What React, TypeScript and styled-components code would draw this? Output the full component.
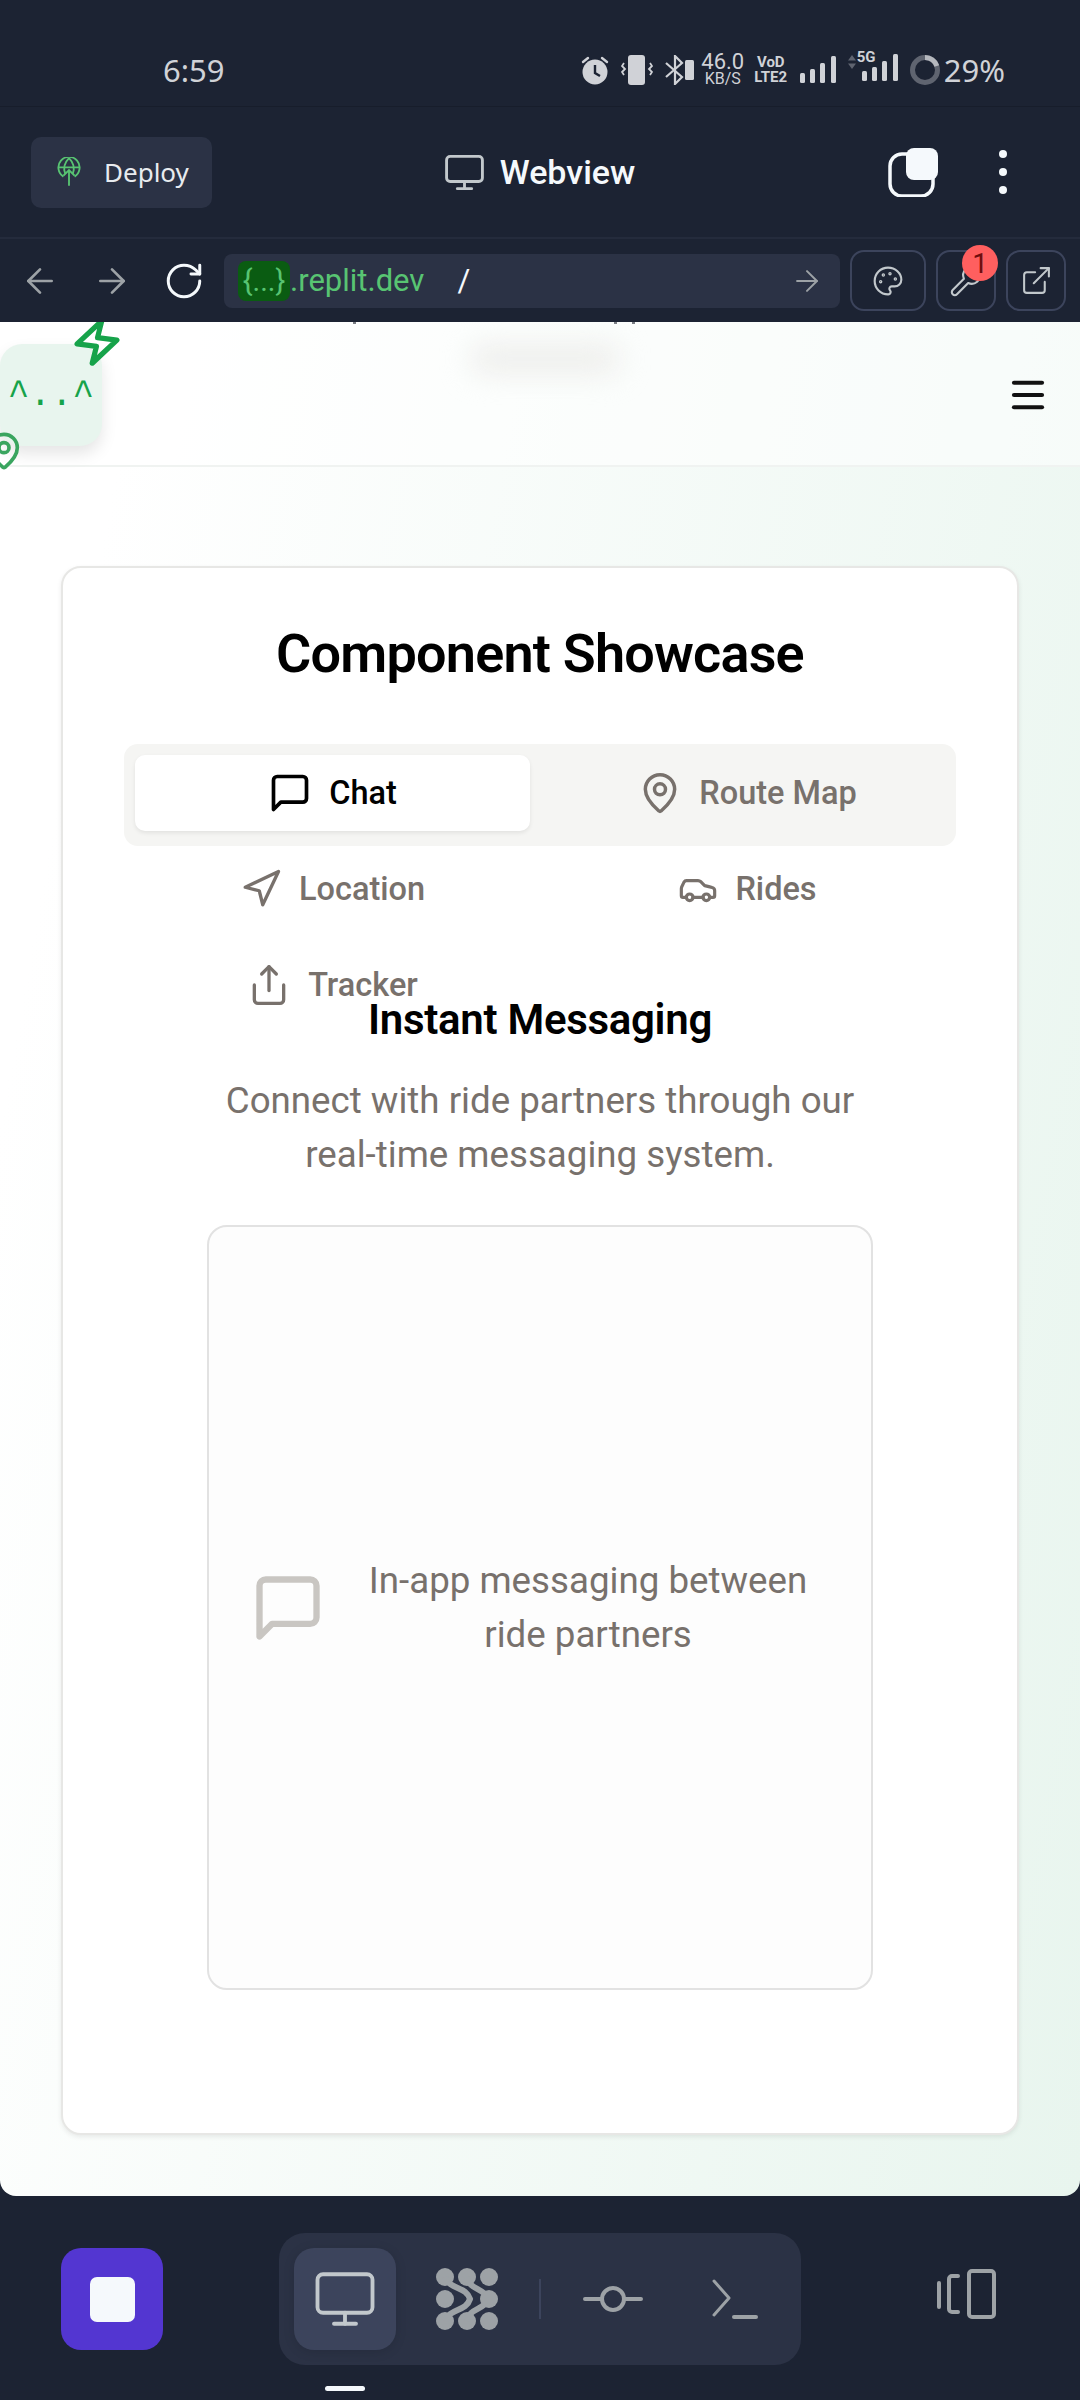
import styled, { createGlobalStyle } from "styled-components";
import {
  ArrowLeft,
  ArrowRight,
  Car,
  ExternalLink,
  MapPin,
  Menu,
  Monitor,
  Navigation,
  Palette,
  RotateCw,
  Share,
  Wrench,
} from "lucide-react";

const GlobalStyle = createGlobalStyle`
  html, body {
    margin: 0;
    padding: 0;
    background: #1c2333;
  }
  * {
    box-sizing: border-box;
  }
`;

const ChatIcon = ({ size, color }: { size: number; color: string }) => (
  <svg width={size} height={size} viewBox="0 0 24 24" fill="none" stroke={color} strokeWidth="2" strokeLinecap="round" strokeLinejoin="round">
    <path d="M21 15a2 2 0 0 1-2 2H7l-4 4V5a2 2 0 0 1 2-2h14a2 2 0 0 1 2 2z" />
  </svg>
);

const BoltIcon = () => (
  <svg width="52" height="52" viewBox="0 0 24 24" fill="none" stroke="#16a34a" strokeWidth="2.4" strokeLinecap="round" strokeLinejoin="round">
    <polygon points="13 2 3 14 12 14 11 22 21 10 12 10 13 2" />
  </svg>
);

const AlarmIcon = () => (
  <svg width="28" height="30" viewBox="0 0 28 30" fill="none">
    <circle cx="14" cy="17" r="12.5" fill="#d0d2d7" />
    <path d="M14 10v8l5 3" stroke="#1c2333" strokeWidth="2.4" />
    <path d="M2 7l5-4M26 7l-5-4" stroke="#d0d2d7" strokeWidth="2.4" strokeLinecap="round" />
  </svg>
);

const VibrateIcon = () => (
  <svg width="32" height="30" viewBox="0 0 32 30" fill="none">
    <rect x="7" y="0" width="17" height="30" rx="3" fill="#d0d2d7" />
    <path d="M3 8l-2 3 3 3-3 3 2 3M29 8l2 3-3 3 3 3-2 3" stroke="#d0d2d7" strokeWidth="1.8" />
  </svg>
);

const BluetoothIcon = () => (
  <svg width="30" height="30" viewBox="0 0 30 30" fill="none">
    <path d="M1 8l16 14-7 7V1l7 7L1 22" stroke="#d0d2d7" strokeWidth="2.2" />
    <rect x="20" y="5" width="9" height="20" rx="1.5" fill="#d0d2d7" />
  </svg>
);

const SignalBars = () => (
  <svg width="36" height="27" viewBox="0 0 36 27" fill="#d0d2d7">
    <rect x="0" y="17" width="5" height="10" rx="1.5" />
    <rect x="10" y="13" width="5" height="14" rx="1.5" />
    <rect x="20" y="7" width="5" height="20" rx="1.5" />
    <rect x="31" y="0" width="5" height="27" rx="1.5" />
  </svg>
);

const DataArrows = () => (
  <svg width="8" height="14" viewBox="0 0 8 14" fill="#5f6470">
    <path d="M4 0l4 5.5H0zM4 14l4-5.5H0z" />
  </svg>
);

const BatteryRing = () => (
  <svg width="30" height="30" viewBox="0 0 30 30" fill="none">
    <circle cx="15" cy="15" r="12.5" stroke="#5f6470" strokeWidth="5" />
    <path d="M15 2.5A12.5 12.5 0 0 1 26.8 11" stroke="#b5b8be" strokeWidth="5" />
  </svg>
);

const DeployIcon = () => (
  <svg width="24" height="30" viewBox="0 0 26 32" fill="none" stroke="#58c472" strokeWidth="2">
    <path d="M7 21a11.5 11.5 0 1 1 12 0" />
    <path d="M2 11h22M13 1c-6 6-6 12-4 17M13 1c6 6 6 12 4 17" />
    <path d="M13 31V14M7 20l6-6 6 6" />
  </svg>
);

const TabsStackIcon = () => (
  <svg width="50" height="50" viewBox="0 0 50 50" fill="none">
    <rect x="2" y="7" width="43" height="42" rx="12" stroke="#f5f9fc" strokeWidth="3.5" />
    <rect x="18" y="1" width="32" height="32" rx="8" fill="#f5f9fc" />
  </svg>
);

const AgentIcon = () => (
  <svg width="62" height="62" viewBox="0 0 62 62" fill="#9da2a6" stroke="none">
    <circle cx="9" cy="9" r="9" />
    <circle cx="31" cy="9" r="9" />
    <circle cx="53" cy="9" r="9" />
    <circle cx="9" cy="31" r="9" />
    <circle cx="53" cy="31" r="9" />
    <circle cx="9" cy="53" r="9" />
    <circle cx="31" cy="53" r="9" />
    <circle cx="53" cy="53" r="9" />
    <path d="M9 9C14 22 30 18 34 31C30 44 14 40 9 53M31 9C33 22 48 20 53 31C48 42 33 40 31 53" fill="none" stroke="#9da2a6" strokeWidth="6" />
  </svg>
);

const CommitIcon = () => (
  <svg width="60" height="28" viewBox="0 0 60 28" fill="none" stroke="#9da2a6" strokeWidth="4" strokeLinecap="round">
    <circle cx="30" cy="14" r="11" />
    <path d="M2 14h17M41 14h17" />
  </svg>
);

const ShellIcon = () => (
  <svg width="46" height="40" viewBox="0 0 46 40" fill="none" stroke="#9da2a6" strokeWidth="3" strokeLinecap="round" strokeLinejoin="round">
    <path d="M2 2l15 17-15 17" />
    <path d="M22 38h22" strokeWidth="4" />
  </svg>
);

const PanelsIcon = () => (
  <svg width="60" height="50" viewBox="0 0 60 50" fill="none" stroke="#9da2a6" strokeWidth="4" strokeLinecap="round" strokeLinejoin="round">
    <path d="M2 14v24" />
    <path d="M21 7h-6a3 3 0 0 0-3 3v30a3 3 0 0 0 3 3h6" />
    <rect x="32" y="2" width="25" height="46" rx="3" />
  </svg>
);

const App = () => {
  return (
    <Screen>
      <GlobalStyle />
      <StatusBar>
        <Clock>6:59</Clock>
        <StatusIcons>
          <AlarmSlot>
            <AlarmIcon />
          </AlarmSlot>
          <VibrateIcon />
          <BluetoothIcon />
          <NetSpeed>
            <strong>46.0</strong>
            <span>KB/S</span>
          </NetSpeed>
          <VolteTag>
            <span>VoD</span>
            <span>LTE2</span>
          </VolteTag>
          <SignalBars />
          <FiveG>
            <DataArrows />
            <small>5G</small>
            <SignalBars />
          </FiveG>
          <BatteryRing />
          <BatteryText>29%</BatteryText>
        </StatusIcons>
      </StatusBar>

      <AppHeader>
        <DeployButton>
          <DeployIcon />
          Deploy
        </DeployButton>
        <HeaderTitle>
          <Monitor size={43} color="#c2c8cc" strokeWidth={1.6} />
          Webview
        </HeaderTitle>
        <HeaderActions>
          <TabsStackIcon />
          <Kebab>
            <i />
            <i />
            <i />
          </Kebab>
        </HeaderActions>
      </AppHeader>

      <UrlRow>
        <NavButton>
          <ArrowLeft size={40} color="#9da2a6" strokeWidth={1.6} />
        </NavButton>
        <NavButton>
          <ArrowRight size={40} color="#9da2a6" strokeWidth={1.6} />
        </NavButton>
        <NavButton>
          <RotateCw size={42} color="#f5f9fc" strokeWidth={1.7} />
        </NavButton>
        <UrlField>
          <UrlChip>{"{...}"}</UrlChip>
          <UrlHost>.replit.dev</UrlHost>
          <UrlPath>/</UrlPath>
          <ArrowRight size={34} color="#9da2a6" strokeWidth={1.4} />
        </UrlField>
        <ToolButton $width={76}>
          <Palette size={32} color="#c2c8cc" strokeWidth={1.6} />
        </ToolButton>
        <ToolButton $width={60}>
          <Wrench size={34} color="#c2c8cc" strokeWidth={1.5} />
          <Badge>1</Badge>
        </ToolButton>
        <ToolButton $width={60}>
          <ExternalLink size={33} color="#c2c8cc" strokeWidth={1.5} />
        </ToolButton>
      </UrlRow>

      <Viewport>
        <SiteHeader>
          <ClippedStroke $x={353} />
          <ClippedStroke $x={614} />
          <ClippedStroke $x={632} />
          <BlurredTitle />
          <LogoTile>^..^</LogoTile>
          <LogoBolt>
            <BoltIcon />
          </LogoBolt>
          <LogoPin>
            <MapPin size={40} color="#3aa55f" strokeWidth={2.2} />
          </LogoPin>
          <Menu size={42} color="#111" strokeWidth={2.4} />
        </SiteHeader>

        <Card>
          <CardTitle>Component Showcase</CardTitle>
          <TabList>
            <Tab $active>
              <ChatIcon size={44} color="#000" />
              Chat
            </Tab>
            <Tab>
              <MapPin size={44} strokeWidth={1.9} />
              Route Map
            </Tab>
            <Tab>
              <Navigation size={42} strokeWidth={1.9} />
              Location
            </Tab>
            <Tab>
              <Car size={40} strokeWidth={1.9} />
              Rides
            </Tab>
            <Tab>
              <Share size={44} strokeWidth={1.8} />
              Tracker
            </Tab>
          </TabList>

          <PanelTitle>Instant Messaging</PanelTitle>
          <PanelText>
            Connect with ride partners through our
            <br />
            real-time messaging system.
          </PanelText>

          <Placeholder>
            <ChatIcon size={76} color="#c9c6c2" />
            <PlaceholderText>In-app messaging between ride partners</PlaceholderText>
          </Placeholder>
        </Card>
      </Viewport>

      <BottomBar>
        <StopButton>
          <i />
        </StopButton>
        <ToolPill>
          <PillItem $active>
            <Monitor size={66} color="#c2c8cc" strokeWidth={1.4} />
          </PillItem>
          <PillItem>
            <AgentIcon />
          </PillItem>
          <PillDivider />
          <PillItem>
            <CommitIcon />
          </PillItem>
          <PillItem>
            <ShellIcon />
          </PillItem>
        </ToolPill>
        <PanelsButton>
          <PanelsIcon />
        </PanelsButton>
        <HomeIndicator />
      </BottomBar>
    </Screen>
  );
};

const Screen = styled.div`
  width: 1080px;
  height: 2400px;
  display: flex;
  flex-direction: column;
  overflow: hidden;
  background: #1c2333;
  font-family: "Roboto", "Liberation Sans", sans-serif;
`;

const StatusBar = styled.div`
  height: 107px;
  flex: none;
  padding: 33px 75px 0 163px;
  display: flex;
  align-items: center;
  justify-content: space-between;
  border-bottom: 1px solid #171d2b;
`;

const Clock = styled.div`
  font-family: "Noto Sans", sans-serif;
  font-size: 31px;
  color: #d0d2d7;
`;

const StatusIcons = styled.div`
  display: flex;
  align-items: center;
  gap: 12px;
  color: #d0d2d7;
`;

const AlarmSlot = styled.div`
  display: flex;
`;

const NetSpeed = styled.div`
  width: 42px;
  margin: 0 -2px 0 -5px;
  display: flex;
  flex-direction: column;
  align-items: center;

  strong {
    font-size: 22px;
    font-weight: 400;
    line-height: 18px;
  }
  span {
    font-size: 16px;
    line-height: 15px;
  }
`;

const VolteTag = styled.div`
  width: 34px;
  display: flex;
  flex-direction: column;
  align-items: center;
  font-size: 15px;
  font-weight: 700;
  line-height: 15px;
`;

const FiveG = styled.div`
  position: relative;
  padding-left: 14px;

  svg:first-child {
    position: absolute;
    left: 0;
    top: 1px;
  }

  small {
    position: absolute;
    left: 9px;
    top: -6px;
    font-size: 15px;
    font-weight: 700;
  }
`;

const BatteryText = styled.div`
  font-family: "Noto Sans", sans-serif;
  font-size: 31px;
  margin-left: -8px;
`;

const AppHeader = styled.div`
  height: 132px;
  flex: none;
  padding: 0 31px;
  display: grid;
  grid-template-columns: 1fr auto 1fr;
  align-items: center;
  border-bottom: 2px solid #242b3c;
`;

const DeployButton = styled.div`
  width: 181px;
  height: 71px;
  padding-left: 26px;
  display: flex;
  align-items: center;
  gap: 23px;
  border-radius: 10px;
  background: #2b3245;
  color: #e8ebef;
  font-family: "Noto Sans", sans-serif;
  font-size: 26px;
`;

const HeaderTitle = styled.div`
  display: flex;
  align-items: center;
  gap: 14px;
  margin-left: -2px;
  color: #f5f9fc;
  font-size: 34px;
  font-weight: 500;
`;

const HeaderActions = styled.div`
  justify-self: end;
  padding-right: 42px;
  display: flex;
  align-items: center;
  gap: 61px;
`;

const Kebab = styled.div`
  display: flex;
  flex-direction: column;
  gap: 10px;

  i {
    width: 8px;
    height: 8px;
    border-radius: 50%;
    background: #f5f9fc;
  }
`;

const UrlRow = styled.div`
  height: 83px;
  flex: none;
  padding: 0 12px 0 11px;
  display: flex;
  align-items: center;
  gap: 10px;
`;

const NavButton = styled.div`
  width: 58px;
  margin-right: 4px;
  display: flex;
  justify-content: center;
`;

const UrlField = styled.div`
  width: 616px;
  height: 54px;
  margin-left: -3px;
  padding: 0 16px 0 14px;
  display: flex;
  align-items: center;
  border-radius: 8px;
  background: #2b3245;
  font-size: 31px;
`;

const UrlChip = styled.span`
  height: 40px;
  width: 52px;
  display: flex;
  align-items: center;
  justify-content: center;
  border-radius: 8px;
  background: #0a5c12;
  color: #58c472;
  font-size: 29px;
`;

const UrlHost = styled.span`
  color: #58c472;
`;

const UrlPath = styled.span`
  flex: 1;
  padding-left: 33px;
  color: #f5f9fc;
`;

const ToolButton = styled.div<{ $width: number }>`
  position: relative;
  width: ${(p) => p.$width}px;
  height: 61px;
  display: flex;
  align-items: center;
  justify-content: center;
  border: 2px solid #3c445c;
  border-radius: 14px;
`;

const Badge = styled.div`
  position: absolute;
  top: -7px;
  right: -4px;
  width: 36px;
  height: 36px;
  display: flex;
  align-items: center;
  justify-content: center;
  border-radius: 50%;
  background: #ff5f5f;
  color: #6f0e0e;
  font-size: 28px;
`;

const Viewport = styled.div`
  flex: 1;
  position: relative;
  overflow: hidden;
  border-radius: 0 0 16px 16px;
  background: linear-gradient(100deg, #ffffff 10%, #e8f5ee 100%);
`;

const SiteHeader = styled.div`
  position: relative;
  height: 145px;
  padding: 2px 31px 0 0;
  display: flex;
  align-items: center;
  justify-content: flex-end;
  background: rgba(255, 255, 255, 0.55);
  border-bottom: 2px solid #f0f3f1;
`;

const ClippedStroke = styled.span<{ $x: number }>`
  position: absolute;
  top: 0;
  left: ${(p) => p.$x}px;
  width: 3px;
  height: 2px;
  background: #7a7d84;
`;

const BlurredTitle = styled.div`
  position: absolute;
  top: 22px;
  left: 470px;
  width: 150px;
  height: 30px;
  border-radius: 15px;
  background: #eeeeec;
  filter: blur(14px);
`;

const LogoTile = styled.div`
  position: absolute;
  top: 22px;
  left: 0;
  width: 102px;
  height: 102px;
  display: flex;
  align-items: center;
  justify-content: center;
  border-radius: 22px;
  background: #e8f5ee;
  box-shadow: 0 8px 16px rgba(0, 0, 0, 0.1);
  color: #16a34a;
  font-family: "Liberation Mono", monospace;
  font-size: 36px;
`;

const LogoBolt = styled.div`
  position: absolute;
  top: -6px;
  left: 71px;
  display: flex;
  transform: rotate(7deg);
`;

const LogoPin = styled.div`
  position: absolute;
  top: 109px;
  left: -16px;
  display: flex;
`;

const Card = styled.div`
  margin: 99px 61px 0;
  height: 1569px;
  padding: 55px 61px 0;
  display: flex;
  flex-direction: column;
  align-items: stretch;
  border: 2px solid #e7e7e5;
  border-radius: 20px;
  background: #fff;
  box-shadow: 0 2px 5px rgba(0, 0, 0, 0.08);
`;

const CardTitle = styled.h1`
  margin: 0 0 59px;
  font-size: 54px;
  font-weight: 600;
  letter-spacing: -0.8px;
  line-height: 62px;
  text-align: center;
  color: #000;
`;

const TabList = styled.div`
  height: 102px;
  padding: 11px;
  display: grid;
  grid-template-columns: 1fr 1fr;
  grid-auto-rows: 76px;
  gap: 20px;
  border-radius: 14px;
  background: #f5f5f3;
`;

const Tab = styled.div<{ $active?: boolean }>`
  display: flex;
  align-items: center;
  justify-content: center;
  gap: 17px;
  border-radius: 10px;
  background: ${(p) => (p.$active ? "#fff" : "transparent")};
  box-shadow: ${(p) => (p.$active ? "0 2px 4px rgba(0, 0, 0, 0.08)" : "none")};
  color: ${(p) => (p.$active ? "#000" : "#78716c")};
  font-size: 32.5px;
  font-weight: 500;
`;

const PanelTitle = styled.h2`
  margin: 150px 0 0;
  font-size: 42px;
  font-weight: 600;
  letter-spacing: -0.3px;
  line-height: 48px;
  text-align: center;
  color: #000;
`;

const PanelText = styled.p`
  margin: 30px 0 43px;
  font-size: 36.7px;
  line-height: 54px;
  text-align: center;
  color: #78716c;
`;

const Placeholder = styled.div`
  width: 666px;
  height: 765px;
  align-self: center;
  padding-left: 41px;
  display: flex;
  align-items: center;
  gap: 22px;
  border: 2px solid #e2e2e2;
  border-radius: 20px;
  background: #fdfdfd;
`;

const PlaceholderText = styled.div`
  width: 480px;
  font-size: 36.7px;
  line-height: 54px;
  text-align: center;
  color: #78716c;
`;

const BottomBar = styled.div`
  position: relative;
  height: 204px;
  flex: none;
  padding: 37px 83px 0 61px;
  display: flex;
  align-items: flex-start;
`;

const StopButton = styled.div`
  width: 102px;
  height: 102px;
  margin-top: 15px;
  display: flex;
  align-items: center;
  justify-content: center;
  border-radius: 20px;
  background: #5336d1;

  i {
    width: 45px;
    height: 45px;
    border-radius: 7px;
    background: #f5f9fc;
  }
`;

const ToolPill = styled.div`
  width: 522px;
  height: 132px;
  margin-left: 116px;
  padding: 15px;
  display: flex;
  align-items: flex-start;
  gap: 20px;
  border-radius: 26px;
  background: #2b3245;
`;

const PillItem = styled.div<{ $active?: boolean }>`
  width: 102px;
  height: 102px;
  flex: none;
  display: flex;
  align-items: center;
  justify-content: center;
  border-radius: 20px;
  background: ${(p) => (p.$active ? "#3c445c" : "transparent")};
  box-shadow: ${(p) => (p.$active ? "0 2px 12px rgba(0, 0, 0, 0.12)" : "none")};
`;

const PillDivider = styled.div`
  width: 2px;
  height: 40px;
  flex: none;
  margin: 31px 1px 0;
  background: #3c445c;
`;

const PanelsButton = styled.div`
  margin: 36px 0 0 auto;
  display: flex;
`;

const HomeIndicator = styled.div`
  position: absolute;
  left: 325px;
  top: 190px;
  width: 40px;
  height: 5px;
  border-radius: 3px;
  background: #f5f9fc;
`;

export default App;
